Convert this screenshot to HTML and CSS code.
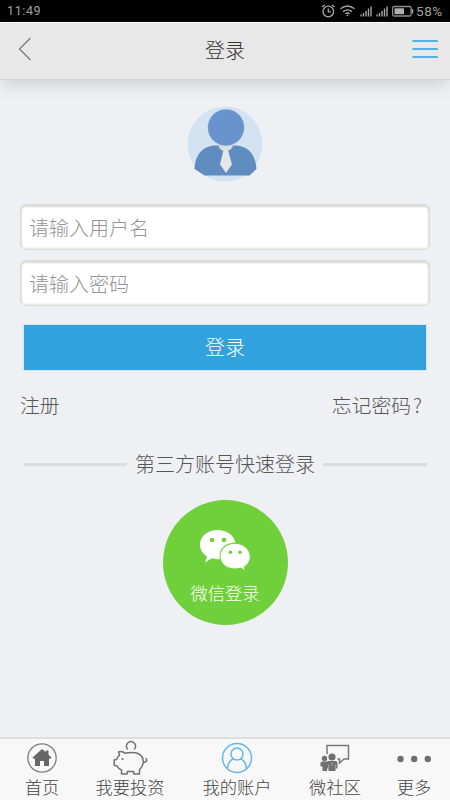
FILE: index.html
```html
<!DOCTYPE html>
<html lang="zh-CN">
<head>
<meta charset="utf-8">
<meta name="viewport" content="width=device-width, initial-scale=1">
<title>登录</title>
<link rel="stylesheet" href="styles.css">
</head>
<body>
<div class="status">
  <span class="time">11:49</span>
  <svg class="status-icons" width="94" height="22" viewBox="0 0 94 22" fill="none" stroke="#a6a6a6">
    <circle cx="8.3" cy="11.500" r="5.300" stroke-width="1.3"/>
    <path d="M8.3 8.500v3.300h2.600M2 7l2.800-2M14.600 7l-2.800-2" stroke-width="1.300"/>
    <path d="M20.500 8.700q7-5.400 14 0M23 11.600q4.500-3.500 9 0M25.300 13.800q2.200-1.700 4.400 0" stroke-width="1.400"/>
    <circle cx="27.500" cy="15.300" r=".9" fill="#a6a6a6" stroke="none"/>
    <path d="M41 17v-2M43.500 17v-3.500M46 17v-5.500M48.500 17v-8M51 17v-10M57 17v-2M59.500 17v-3.500M62 17v-5.500M64.500 17v-8M67 17v-10" transform="translate(0 -.5)" stroke-width="1.400"/>
    <rect x="72.600" y="6.500" width="18.500" height="9.500" rx="1.500" stroke="#8c8c8c" stroke-width="1.300"/>
    <path d="M92.500 9v4.500" stroke-width="1.400"/>
    <rect x="74.500" y="8.300" width="9.500" height="5.900" fill="#b0b0b0" stroke="none"/>
  </svg>
  <span class="percent">58%</span>
</div>
<header class="header">
  <svg width="14" height="24" viewBox="0 0 14 24" fill="none" stroke="#777" stroke-width="1.200"><path d="M12.500 1L1.500 12L12.500 23"/></svg>
  <h1>登录</h1>
  <svg width="26" height="20" viewBox="0 0 26 20" stroke="#55afe2" stroke-width="2" stroke-linecap="round"><path d="M1.200 2h23.800M1.200 10h23.800M1.200 18h23.800"/></svg>
</header>
<main class="main">
  <svg class="avatar" width="76" height="76" viewBox="0 0 76 76">
    <circle cx="38" cy="38" r="37.500" fill="#d4e3f2"/>
    <path d="M7.500 63.500C8 48 17 40 29 40h19c12 0 20.500 8 21.500 23.500L62.500 70h-45z" transform="translate(0 -.5)" fill="#608dc0"/>
    <path d="M31.500 39.500C32.500 44 36 45 38.500 45S45 44 46 39.500z" fill="#d9dee5"/>
    <path d="M36.500 44h4.500l4 14.500L39 67l-6-8.500z" fill="#e5e6e8"/>
    <circle cx="39" cy="21.500" r="18.500" fill="#6893cc" stroke="#dce7f2" stroke-width=".6"/>
  </svg>
  <form class="form">
    <input type="text" placeholder="请输入用户名">
    <input type="password" placeholder="请输入密码">
    <button type="button">登录</button>
  </form>
  <div class="links"><a>注册</a><a>忘记密码<span class="mark">?</span></a></div>
  <div class="divider"><span>第三方账号快速登录</span></div>
  <div class="wechat">
    <svg width="52" height="42" viewBox="0 0 52 42" fill="#fff">
      <path d="M18.500 0C8.300 0 1 6.500 1 14.700c0 5 2.800 9 7.100 11.800L6 32.500l6.800-4.300q4 1.300 9.200 1C18 19 27 12.500 36.500 12.800 35 5 27.500 0 18.500 0z"/>
      <path d="M36 13.300c-8.500 0-15 5.600-15 12.900s6.500 12.800 15 12.800c2.100 0 4-.4 5.700-1L46.500 41 45.300 36.800C49 34.500 51.300 30.900 51.300 26.700 51.300 19.400 44.500 13.300 36 13.300z" stroke="#70d03b" stroke-width="1"/>
      <g fill="#70d03b"><circle cx="13" cy="10" r="2.300"/><circle cx="25" cy="10" r="2.300"/><circle cx="31.500" cy="22.300" r="1.800"/><circle cx="41" cy="22.300" r="1.800"/></g>
    </svg>
    <span>微信登录</span>
  </div>
</main>
<nav class="tabs">
  <div class="tab">
    <svg width="32" height="32" viewBox="0 0 32 32"><circle cx="16" cy="16" r="14.200" fill="none" stroke="#7c7c7c" stroke-width="1.300"/><path d="M16 7L6.500 15.500 8 17l1-.8V24h5v-5h4v5h5v-7.800l1 .8 1.500-1.500-3-2.700V8.500h-2.500V10z" fill="#666"/></svg>
    <span>首页</span>
  </div>
  <div class="tab">
    <svg width="36" height="36" viewBox="0 0 36 36" fill="none" stroke="#707070" stroke-width="1.500" stroke-linejoin="round"><path d="M15.800 9.500A4.600 4.600 0 1 1 22.200 9.500"/><path d="M6.500 12L7.500 15C6 16.500 5.300 18 4.500 19.500L2.200 20v5.200L5 26c1 2 2.500 3 4.500 4v4h5.500l.5-2.500h6L22 34h5.500v-4.500c3-2.500 4-5.500 3.700-9C30.500 14.500 26 12.500 20 12.500c-3 0-5 .2-7 .8C11 11.500 8.500 11.300 6.500 12zM31 22c4 1 4.500-2.500 2.700-4"/><circle cx="10.500" cy="19" r="1" fill="#666" stroke="none"/></svg>
    <span>我要投资</span>
  </div>
  <div class="tab">
    <svg width="32" height="32" viewBox="0 0 32 32" fill="none" stroke="#65b7ea" stroke-width="1.500"><circle cx="16" cy="16" r="14.500"/><circle cx="16" cy="12" r="6"/><path d="M6.500 27C6.500 21 10 17 13 17M19 17c3 0 6.500 4 6.500 10"/></svg>
    <span>我的账户</span>
  </div>
  <div class="tab">
    <svg width="32" height="30" viewBox="0 0 32 30" fill="#707070"><path d="M8 11V2.500h21.500V16h-4.500L20.500 20V16h-2" fill="none" stroke="#777" stroke-width="1.500"/><circle cx="5.500" cy="15.500" r="2.700"/><path d="M3 18.500h5V28H3.500v-4.500H1.500V20q0-1.500 1.500-1.500z"/><circle cx="13" cy="14" r="3.600"/><path d="M9.500 18h7q2 0 2 2v5.500h-2V28h-7v-2.500h-2V20q0-2 2-2z"/><path d="M13 19v4M9.700 21.500V25M16.300 21.500V25" stroke="#ccc" stroke-width=".6"/></svg>
    <span>微社区</span>
  </div>
  <div class="tab">
    <svg width="36" height="10" viewBox="0 0 36 10" fill="#707070"><circle cx="4.500" cy="6" r="3.200"/><circle cx="18.200" cy="6" r="3.200"/><circle cx="31.800" cy="6" r="3.200"/></svg>
    <span>更多</span>
  </div>
</nav>
</body>
</html>
```
FILE: styles.css
```css
* { box-sizing: border-box; }
body {
  margin: 0;
  height: 800px;
  display: flex;
  flex-direction: column;
  overflow: hidden;
  background: #eff0f3;
  color: #555;
  font-family: "Noto Sans CJK SC", sans-serif;
  font-weight: 300;
}
svg { display: block; flex: none; }
.status {
  height: 22px;
  flex: none;
  display: flex;
  align-items: center;
  padding: 0 6px 0 7px;
  background: #000;
  color: #a0a0a0;
  font: 12.5px/22px Roboto, sans-serif;
  letter-spacing: .6px;
}
.status-icons { margin-left: auto; }
.percent { width: 28px; margin-left: 2px; font-size: 13.5px; letter-spacing: .6px; }
.header {
  height: 58px;
  flex: none;
  display: flex;
  align-items: center;
  justify-content: space-between;
  padding: 0 12px 4px 18px;
  background: #e8e8e8;
  border-top: 1px solid #fff;
  border-bottom: 1px solid #d2d2d2;
  box-shadow: 0 9px 14px -3px #d2d2d2;
}
.header h1 {
  margin: 2px 0 0 6px;
  color: #333;
  font-size: 20px;
  font-weight: 300;
  line-height: 30px;
}
.main {
  flex: 1;
  display: flex;
  flex-direction: column;
  align-items: center;
  padding: 26px 20px 0;
}
.form {
  width: 410px;
  margin-top: 22px;
  display: flex;
  flex-direction: column;
  align-items: center;
  gap: 10px;
}
input {
  width: 410px;
  height: 46px;
  padding: 0 8px;
  border: 1px solid #d9d9d9;
  border-radius: 6px;
  background: #fff;
  box-shadow: inset 0 2px 2px #dcdcdc, inset 0 0 2px 1px #e4e4e4;
  font: 300 20px "Noto Sans CJK SC", sans-serif;
}
input::placeholder { color: #949494; opacity: 1; }
button {
  width: 404px;
  height: 47px;
  margin-top: 8px;
  padding: 0 0 2px;
  border: 1px solid #d5e7f2;
  background: #32a2de;
  background-clip: padding-box;
  color: #fff;
  font: 300 20px "Noto Sans CJK SC", sans-serif;
}
.links {
  width: 410px;
  margin-top: 19px;
  display: flex;
  justify-content: space-between;
  font-size: 19.8px;
  line-height: 30px;
}
.mark { display: inline-block; width: 19px; padding-left: 2px; }
.divider {
  width: 403px;
  margin-top: 29px;
  display: flex;
  align-items: center;
  gap: 8px;
  font-size: 20px;
  line-height: 30px;
  white-space: nowrap;
}
.divider::before, .divider::after {
  content: "";
  flex: 1;
  height: 3px;
  background: #dcdddf;
}
.wechat {
  width: 125px;
  height: 125px;
  margin-top: 21px;
  padding-top: 30px;
  display: flex;
  flex-direction: column;
  align-items: center;
  gap: 8px;
  border-radius: 50%;
  background: #70d03b;
  color: #fff;
  font-size: 17.3px;
  line-height: 26px;
}
.tabs {
  height: 63px;
  flex: none;
  display: grid;
  grid-template-columns: 84px 92px 122px 74px 84px;
  border-top: 2px solid #dedede;
  background: #f8f8f8;
  color: #444;
  font-size: 17.3px;
}
.tab {
  display: grid;
  grid-template-rows: 38px 20px;
  align-content: start;
  justify-items: center;
  align-items: center;
  white-space: nowrap;
}
.tab span { line-height: 20px; }
```
